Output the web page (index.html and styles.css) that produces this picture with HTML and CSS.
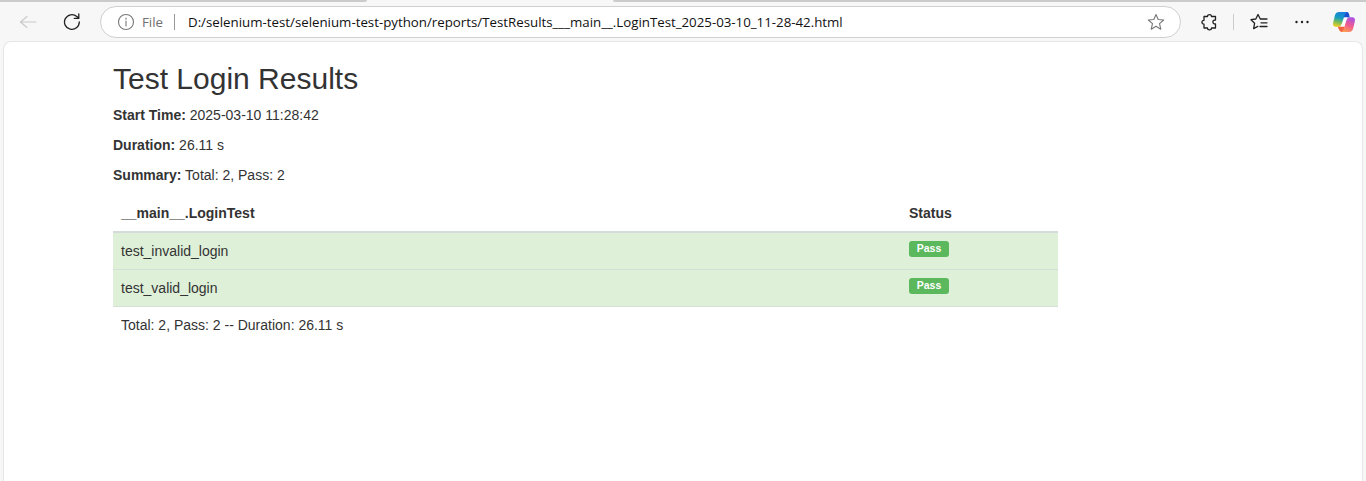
FILE: index.html
```html
<!DOCTYPE html>
<html lang="en">
<head>
<meta charset="utf-8">
<title>Test Login Results</title>
<link rel="stylesheet" href="styles.css">
</head>
<body>
<div class="tabstrip"><span class="tabs-left"></span><span class="tabs-right"></span></div>
<header class="toolbar">
  <svg class="back" width="18" height="16" viewBox="0 0 18 16"><path d="M17 8H1.5M8 2.500L1.500 8L8 13.500"/></svg>
  <svg class="reload" width="18" height="18" viewBox="0 0 18 18"><path d="M16.300 9A7.400 7.400 0 1 1 13.800 3.500L15.500 5M15.800 1V5.400H11.300"/></svg>
  <div class="address">
    <svg class="info" width="18" height="18" viewBox="0 0 18 18"><circle cx="9" cy="9" r="7.500"/><path d="M9 8V13M9 5V6.300"/></svg>
    <span class="scheme">File</span>
    <span class="divider"></span>
    <span class="url">D:/selenium-test/selenium-test-python/reports/TestResults___main__.LoginTest_2025-03-10_11-28-42.html</span>
    <svg class="star" width="18" height="18" viewBox="0 0 18 18"><path d="M9 1.500L11.200 6.500L16.700 7L12.500 10.700L13.800 16.200L9 13.300L4.200 16.200L5.500 10.700L1.300 7L6.800 6.500Z"/></svg>
  </div>
  <svg class="puzzle" width="18" height="18" viewBox="0 0 18 18"><path d="M4 3.500H7.500C7.500 1 11.500 1 11.500 3.500H15.500V7C12 6.700 12 11.300 15.500 11V15H11.500C11.500 17.500 7.500 17.500 7.500 15H4V11.200C1.300 11.200 1.300 7.300 4 7.300Z"/></svg>
  <span class="separator"></span>
  <svg class="favorites" width="18" height="18" viewBox="0 0 18 18"><path d="M11 6H10.300L8 1.500L5.800 6L1 6.700L4.600 10.300L3.600 15.600L7.800 13.400M11 6H17M11 9.800H17M10 13.500H17"/></svg>
  <svg class="more" width="16" height="6" viewBox="0 0 16 6"><circle cx="2.500" cy="3" r="1.200"/><circle cx="8" cy="3" r="1.200"/><circle cx="13.500" cy="3" r="1.200"/></svg>
  <svg class="copilot" width="24" height="22" viewBox="0 0 24 22">
    <defs>
      <linearGradient id="cool" x1="0.600" y1="0" x2="0.400" y2="1"><stop offset="0" stop-color="#1a80df"/><stop offset=".4" stop-color="#159bc2"/><stop offset=".7" stop-color="#76bd5b"/><stop offset="1" stop-color="#edcd22"/></linearGradient>
      <linearGradient id="warm" x1="0.700" y1="0" x2="0.300" y2="1"><stop offset="0" stop-color="#aa52e5"/><stop offset=".5" stop-color="#ee5a91"/><stop offset="1" stop-color="#ff9c55"/></linearGradient>
    </defs>
    <path fill="#1c50cf" d="M12 1H15Q16.500 1 17 3L17.800 6.500H11.500Z"/>
    <path fill="#f1653e" d="M5.500 15.500H12.500L12 21H10Q8 21 7.200 19Z"/>
    <path fill="#fff" d="M12.500 6.500H15.500L13 15.500H8.500L10 9Q10.500 6.500 12.500 6.500Z"/>
    <path fill="url(#cool)" d="M7 1H15Q13.500 1.500 12.700 4L9.700 13Q8.800 15.700 6 15.700H4Q0 15.700 1.300 11L3 4Q4 1 7 1Z"/>
    <path fill="url(#warm)" d="M17 21H9.500Q11 20.500 11.700 18L14.500 9Q15.300 6.300 18 6.300H20Q24 6.300 22.700 11L21 18Q20 21 17 21Z"/>
  </svg>
</header>
<main class="page">
  <div class="report">
    <h1>Test Login Results</h1>
    <p><strong>Start Time:</strong> 2025-03-10 11:28:42</p>
    <p><strong>Duration:</strong> 26.11 s</p>
    <p><strong>Summary:</strong> Total: 2, Pass: 2</p>
    <div class="results">
      <div class="row head"><span>__main__.LoginTest</span><span>Status</span></div>
      <div class="row success"><span>test_invalid_login</span><span><b class="label">Pass</b></span></div>
      <div class="row success ruled"><span>test_valid_login</span><span><b class="label">Pass</b></span></div>
      <div class="row ruled"><span>Total: 2, Pass: 2 -- Duration: 26.11 s</span></div>
    </div>
  </div>
</main>
</body>
</html>
```
FILE: styles.css
```css
* { box-sizing: border-box; }
body {
  margin: 0;
  height: 481px;
  overflow: hidden;
  display: flex;
  flex-direction: column;
  background: #f7f7f7;
  color: #333;
  font: 14px/20px "Liberation Sans", Arial, sans-serif;
}
svg { display: block; flex: none; fill: none; stroke: #222; stroke-width: 1.3; stroke-linejoin: round; stroke-linecap: round; }
.tabstrip { display: flex; justify-content: space-between; height: 2px; flex: none; }
.tabs-left, .tabs-right { height: 2px; background: #cbcbcb; }
.tabs-left { width: 367px; border-bottom-right-radius: 4px; }
.tabs-right { width: 753px; border-bottom-left-radius: 4px; }
.toolbar { display: flex; align-items: center; height: 39px; flex: none; padding-left: 19px; }
.back { stroke: #c9c9c9; stroke-width: 1.1; }
.reload { margin-left: 26px; }
.address {
  display: flex;
  align-items: center;
  width: 1081px;
  height: 32px;
  margin: 1px 0 0 19px;
  padding: 0 15px 0 16px;
  border: 1px solid #d0d0d0;
  border-radius: 16px;
  background: #fff;
  font-family: "Open Sans", "Noto Sans", sans-serif;
  font-size: 13.3px;
}
.info { stroke: #777; stroke-width: 1.1; }
.scheme { width: 21px; margin-left: 7px; color: #707070; white-space: nowrap; }
.divider { width: 1px; height: 16px; margin-left: 11px; background: #999; }
.url { margin-left: 13px; color: #111; white-space: nowrap; letter-spacing: -.01px; }
.star { margin-left: auto; stroke: #777; stroke-width: 1.1; }
.puzzle { margin-left: 19px; }
.separator { width: 1px; height: 16px; margin-left: 15px; background: #ccc; }
.favorites { margin-left: 16px; }
.more { margin-left: 26px; fill: #222; stroke: none; }
.copilot { margin-left: 22px; stroke: none; }
.page { flex: 1; margin: 0 3px; border: 1px solid #e6e6e6; border-bottom: 0; border-radius: 8px 8px 0 0; background: #fff; }
.report { width: 945px; margin: 20px 0 0 109px; }
h1 { margin: 0 0 10px; font-size: 30px; line-height: 33px; font-weight: 400; }
p { margin: 0 0 10px; }
.row { display: grid; grid-template-columns: 788px 1fr; height: 36px; }
.row > span { padding: 8px; }
.head { height: 38px; border-bottom: 2px solid #d5dadb; font-weight: 700; }
.success { background: #dff0d8; }
.ruled { height: 37px; border-top: 1px solid #d5dfd5; }
.label { display: block; width: 40px; height: 16px; border-radius: 3px; background: #5cb85c; color: #fff; font-size: 10.5px; line-height: 15px; text-align: center; }
```
